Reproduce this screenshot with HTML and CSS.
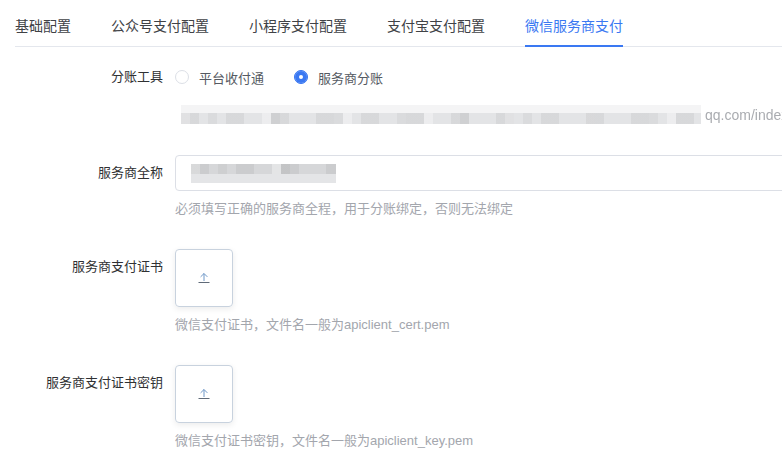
FILE: index.html
```html
<!DOCTYPE html>
<html lang="zh-CN">
<head>
  <meta charset="UTF-8" />
  <meta name="viewport" content="width=device-width, initial-scale=1.0" />
  <title>支付配置</title>
  <link rel="stylesheet" href="styles.css">
</head>
<body>
  <div class="tabs">
    <div class="tab">基础配置</div>
    <div class="tab">公众号支付配置</div>
    <div class="tab">小程序支付配置</div>
    <div class="tab">支付宝支付配置</div>
    <div class="tab active">微信服务商支付</div>
  </div>

  <form class="pay-form">
    <div class="form-item">
      <label class="form-label">分账工具</label>
      <div class="form-control">
        <div class="radio-group">
          <span class="radio"><span class="radio-dot"></span>平台收付通</span>
          <span class="radio checked"><span class="radio-dot"></span>服务商分账</span>
        </div>
        <div class="notify-url">
          <span class="mosaic mosaic-url"></span>
          <span class="url-tail">qq.com/index</span>
        </div>
      </div>
    </div>

    <div class="form-item">
      <label class="form-label">服务商全称</label>
      <div class="form-control">
        <div class="text-input">
          <span class="mosaic mosaic-name"></span>
        </div>
        <div class="help">必须填写正确的服务商全程，用于分账绑定，否则无法绑定</div>
      </div>
    </div>

    <div class="form-item">
      <label class="form-label">服务商支付证书</label>
      <div class="form-control">
        <div class="upload">
          <svg width="12" height="12" viewBox="0 0 12 12" fill="none" stroke="#5f6a78" stroke-width="1">
            <path d="M6 9V1.5M2.6 4.9L6 1.5l3.4 3.4" stroke="#6f98c8"/>
            <path d="M0.5 10.5h11"/>
          </svg>
        </div>
        <div class="help">微信支付证书，文件名一般为apiclient_cert.pem</div>
      </div>
    </div>

    <div class="form-item">
      <label class="form-label">服务商支付证书密钥</label>
      <div class="form-control">
        <div class="upload">
          <svg width="12" height="12" viewBox="0 0 12 12" fill="none" stroke="#5f6a78" stroke-width="1">
            <path d="M6 9V1.5M2.6 4.9L6 1.5l3.4 3.4" stroke="#6f98c8"/>
            <path d="M0.5 10.5h11"/>
          </svg>
        </div>
        <div class="help">微信支付证书密钥，文件名一般为apiclient_key.pem</div>
      </div>
    </div>
  </form>
</body>
</html>
```

FILE: styles.css
```css
body {
  margin: 0;
  background: #fff;
  font-family: "Liberation Sans", "Noto Sans CJK SC", sans-serif;
  color: #303133;
  overflow: hidden;
}

/* tab bar */
.tabs {
  display: flex;
  gap: 40px;
  margin: 0 0 0 15px;
  padding-top: 6px;
  border-bottom: 1px solid #e4e7ed;
}

.tab {
  position: relative;
  font-size: 14px;
  line-height: 40px;
  color: #404246;
}

.tab.active {
  color: #3a78f2;
}

.tab.active::after {
  content: "";
  position: absolute;
  left: 0;
  right: 0;
  bottom: -1px;
  height: 2px;
  background: #3a78f2;
}

/* form */
.pay-form {
  padding: 12px 0 0 15px;
}

.form-item {
  display: flex;
  margin-bottom: 30px;
}

.form-item:last-child {
  margin-bottom: 0;
}

.form-label {
  width: 160px;
  flex-shrink: 0;
  box-sizing: border-box;
  padding-right: 12px;
  text-align: right;
  font-size: 13px;
  line-height: 36px;
  color: #303133;
}

.form-control {
  width: 640px;
  flex-shrink: 0;
}

.radio-group {
  display: flex;
  gap: 30px;
  height: 36px;
  align-items: center;
}

.radio {
  display: flex;
  align-items: center;
  gap: 10px;
  font-size: 13px;
  color: #555a62;
}

.radio-dot {
  width: 14px;
  height: 14px;
  box-sizing: border-box;
  border: 1px solid #dcdfe6;
  border-radius: 50%;
  background: #fff;
}

.radio.checked .radio-dot {
  border-color: #3a78f2;
  background: #3a78f2;
  box-shadow: inset 0 0 0 4px #3a78f2, inset 0 0 0 7px #fff;
}

.notify-url {
  display: flex;
  align-items: center;
  margin-top: 10px;
  height: 20px;
}

.url-tail {
  font-size: 14px;
  color: #8d9096;
  opacity: 0.75;
  white-space: nowrap;
  margin-left: 4px;
}

/* blurred placeholder blocks */
.mosaic {
  display: block;
  filter: blur(0.3px);
  background-color: #e3e4e6;
  background-image:
    repeating-linear-gradient(90deg, rgba(0,0,0,0.05) 0 18px, transparent 18px 45px),
    repeating-linear-gradient(90deg, transparent 0 27px, rgba(0,0,0,0.04) 27px 36px, transparent 36px 63px),
    repeating-linear-gradient(90deg, rgba(255,255,255,0.35) 0 9px, transparent 9px 81px);
}

.mosaic-url {
  margin-left: 6px;
  width: 520px;
  height: 11px;
  margin-top: 6px;
  box-shadow: 0 -8px 0 #f4f4f5;
}

.text-input {
  height: 36px;
  box-sizing: border-box;
  border: 1px solid #dcdfe6;
  border-radius: 4px;
  padding: 8px 15px;
}

.mosaic-name {
  width: 145px;
  height: 10px;
  background-color: #d6d7d9;
  box-shadow: 0 9px 0 #e4e5e7;
}

.help {
  margin-top: 8px;
  font-size: 13px;
  line-height: 20px;
  color: #a3a6ad;
}

.upload {
  width: 58px;
  height: 58px;
  box-sizing: border-box;
  border: 1px solid #c8d2de;
  border-radius: 4px;
  box-shadow: 0 2px 6px rgba(0, 0, 0, 0.08);
  display: flex;
  align-items: center;
  justify-content: center;
}
```
